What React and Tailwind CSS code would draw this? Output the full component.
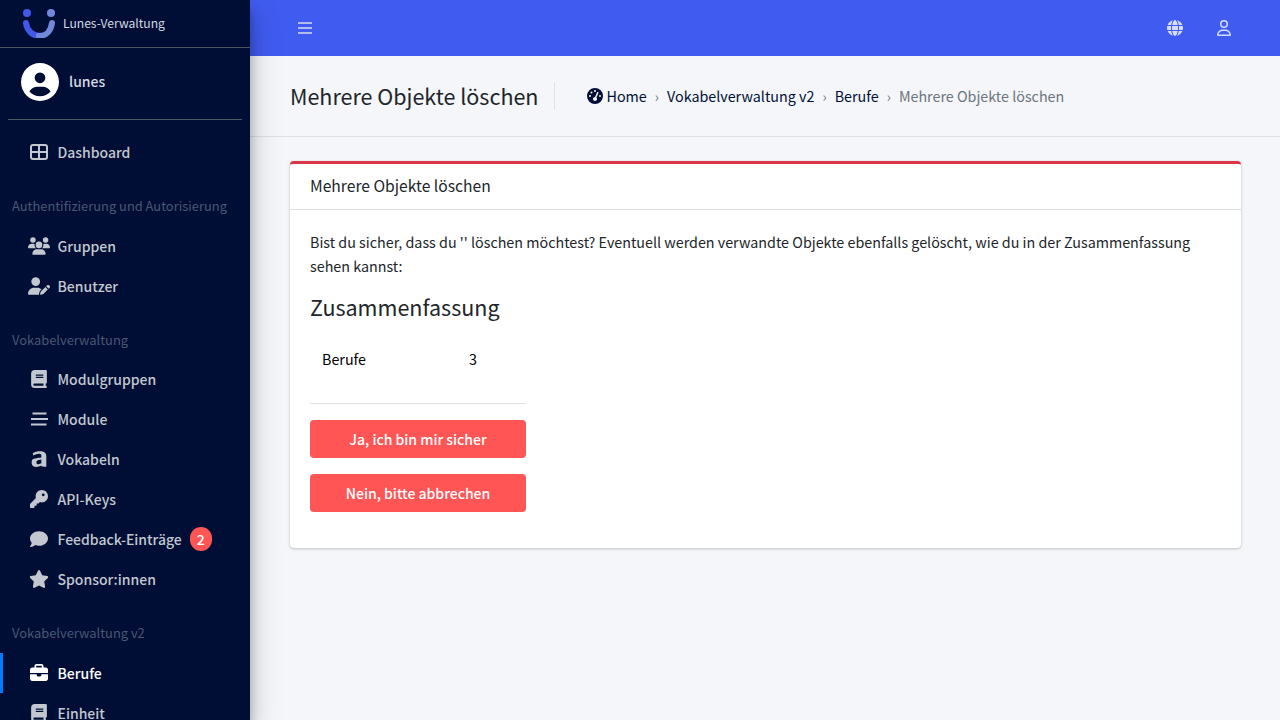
import { FaCircleUser, FaUsers, FaUserPen, FaBook, FaAmilia, FaKey, FaComment, FaStar, FaBriefcase, FaGaugeHigh, FaGlobe, FaRegUser } from "react-icons/fa6";

const DashIcon = () => (
  <svg viewBox="0 0 18 16" className="w-[18px] h-4" fill="none" stroke="currentColor" strokeWidth="2">
    <rect x="1" y="1" width="16" height="14" rx="2" />
    <path d="M9 1v14M1 8h16" />
  </svg>
);

const LinesIcon = () => (
  <svg viewBox="0 0 17 14" className="w-[17px] h-[14px]" stroke="currentColor" strokeWidth="2">
    <path d="M1.5 1.5h14M0 7h17M0 12.5h15.5" />
  </svg>
);

const NavItem = ({ icon, label, badge, active }) => (
  <div className={`h-10 flex items-center pl-7 relative ${active ? "text-white" : "text-[#c2c7d0]"}`}>
    {active && <div className="absolute left-0 top-0 h-10 w-[3px] bg-[#007bff]" />}
    <span className="w-[22px] flex justify-center text-lg">{icon}</span>
    <span className="ml-[7.5px] text-[14px] font-medium">{label}</span>
    {badge && <span className="ml-2 w-[22px] h-6 rounded-full bg-[#ff5555] text-white flex items-center justify-center text-[14px] font-medium">{badge}</span>}
  </div>
);

const Header = ({ children, className }) => (
  <div className={`h-[14px] flex items-center pl-3 text-[12.9px] text-[#4a5673] ${className}`}>{children}</div>
);

export default function App() {
  return (
    <div className="flex h-[720px] w-[1280px] overflow-hidden bg-[#f4f6f9] font-['Noto_Sans_CJK_SC','Noto_Sans',sans-serif] text-[#212529]">
      <aside className="w-[250px] shrink-0 h-[720px] overflow-hidden bg-[#000e35] shadow-[0_14px_28px_rgba(0,0,0,0.25),0_10px_10px_rgba(0,0,0,0.22)] z-10">
        <div className="h-12 border-b border-[#4b545c] flex items-start pl-[23px]">
          <svg viewBox="0 0 32 30" className="w-8 h-[30px] mt-2" fill="none">
            <circle cx="4" cy="5" r="4" fill="#4158e8" />
            <circle cx="28" cy="5" r="4" fill="#7289d9" />
            <path d="M3 15c1 8 7 13 14 13" stroke="#4158e8" strokeWidth="6" strokeLinecap="round" />
            <path d="M29 15c-1 8-6 13-13 13" stroke="#7289d9" strokeWidth="6" strokeLinecap="round" />
          </svg>
          <span className="ml-2 mt-[14px] text-[12.1px] text-[#d4d9e2]">Lunes-Verwaltung</span>
        </div>
        <div className="mx-2 h-[72px] border-b border-[#4f5962] flex items-start pt-[15px] pl-[13px]">
          <FaCircleUser className="text-white text-[38px]" />
          <span className="ml-[10px] mt-2 text-[14px] font-medium text-[#d4d9e2]">lunes</span>
        </div>
        <nav className="pt-3">
          <NavItem icon={<DashIcon />} label="Dashboard" />
          <Header className="mt-[27px] mb-[13px]">Authentifizierung und Autorisierung</Header>
          <NavItem icon={<FaUsers className="w-[22px] h-[18px]" />} label="Gruppen" />
          <NavItem icon={<FaUserPen className="w-[22px] h-[18px]" />} label="Benutzer" />
          <Header className="mt-[27px] mb-3">Vokabelverwaltung</Header>
          <NavItem icon={<FaBook />} label="Modulgruppen" />
          <NavItem icon={<LinesIcon />} label="Module" />
          <NavItem icon={<FaAmilia />} label="Vokabeln" />
          <NavItem icon={<FaKey />} label="API-Keys" />
          <NavItem icon={<FaComment />} label="Feedback-Einträge" badge="2" />
          <NavItem icon={<FaStar className="w-5 h-[18px]" />} label="Sponsor:innen" />
          <Header className="mt-[27px] mb-[13px]">Vokabelverwaltung v2</Header>
          <NavItem icon={<FaBriefcase />} label="Berufe" active />
          <NavItem icon={<FaBook />} label="Einheit" />
        </nav>
      </aside>

      <div className="flex-1 min-w-0">
        <header className="h-14 bg-[#405cf0] flex items-center justify-between pl-12 pr-12 text-[#d5dcfb]">
          <svg viewBox="0 0 14 12" className="w-[14px] h-3" stroke="currentColor" strokeWidth="1.4">
            <path d="M0 1h14M0 6h14M0 11h14" />
          </svg>
          <div className="flex items-center gap-[33px]">
            <FaGlobe className="text-base" />
            <FaRegUser className="text-base" />
          </div>
        </header>

        <div className="h-[81px] border-b border-[#dee2e6] flex items-center pl-10">
          <h1 className="text-[21.5px] pr-4 border-r border-[#dee2e6] leading-[28px]">Mehrere Objekte löschen</h1>
          <div className="ml-8 flex items-center text-[14.32px] text-[#001035]">
            <FaGaugeHigh className="text-base mr-[3px]" />
            <span>Home</span>
            <span className="mx-2 text-[#6c757d] text-sm">›</span>
            <span>Vokabelverwaltung v2</span>
            <span className="mx-2 text-[#6c757d] text-sm">›</span>
            <span>Berufe</span>
            <span className="mx-2 text-[#6c757d] text-sm">›</span>
            <span className="text-[#6c757d]">Mehrere Objekte löschen</span>
          </div>
        </div>

        <main className="pt-6 px-10 pr-[39px]">
          <div className="bg-white rounded border-t-[3px] border-[#dc3545] shadow-[0_0_1px_rgba(0,0,0,0.13),0_1px_3px_rgba(0,0,0,0.2)]">
            <div className="h-[46px] border-b border-[#dee2e6] flex items-center px-5 text-[15.65px] pb-[2px]">Mehrere Objekte löschen</div>
            <div className="px-5 pt-5 pb-9 text-[14.32px] leading-6">
              <p>Bist du sicher, dass du '' löschen möchtest? Eventuell werden verwandte Objekte ebenfalls gelöscht, wie du in der Zusammenfassung sehen kannst:</p>
              <h2 className="text-[21.5px] mt-[14px] leading-[29px]">Zusammenfassung</h2>
              <div className="w-[216px] mt-[14px]">
                <div className="flex h-12 items-center px-3 text-black">
                  <span className="w-[147px]">Berufe</span>
                  <span>3</span>
                </div>
                <div className="mt-5 border-t border-[#dee2e6]" />
                <button className="mt-4 w-full h-[38px] rounded bg-[#ff5555] text-white text-[14px] font-medium block">Ja, ich bin mir sicher</button>
                <button className="mt-4 w-full h-[38px] rounded bg-[#ff5555] text-white text-[14px] font-medium block">Nein, bitte abbrechen</button>
              </div>
            </div>
          </div>
        </main>
      </div>
    </div>
  );
}
